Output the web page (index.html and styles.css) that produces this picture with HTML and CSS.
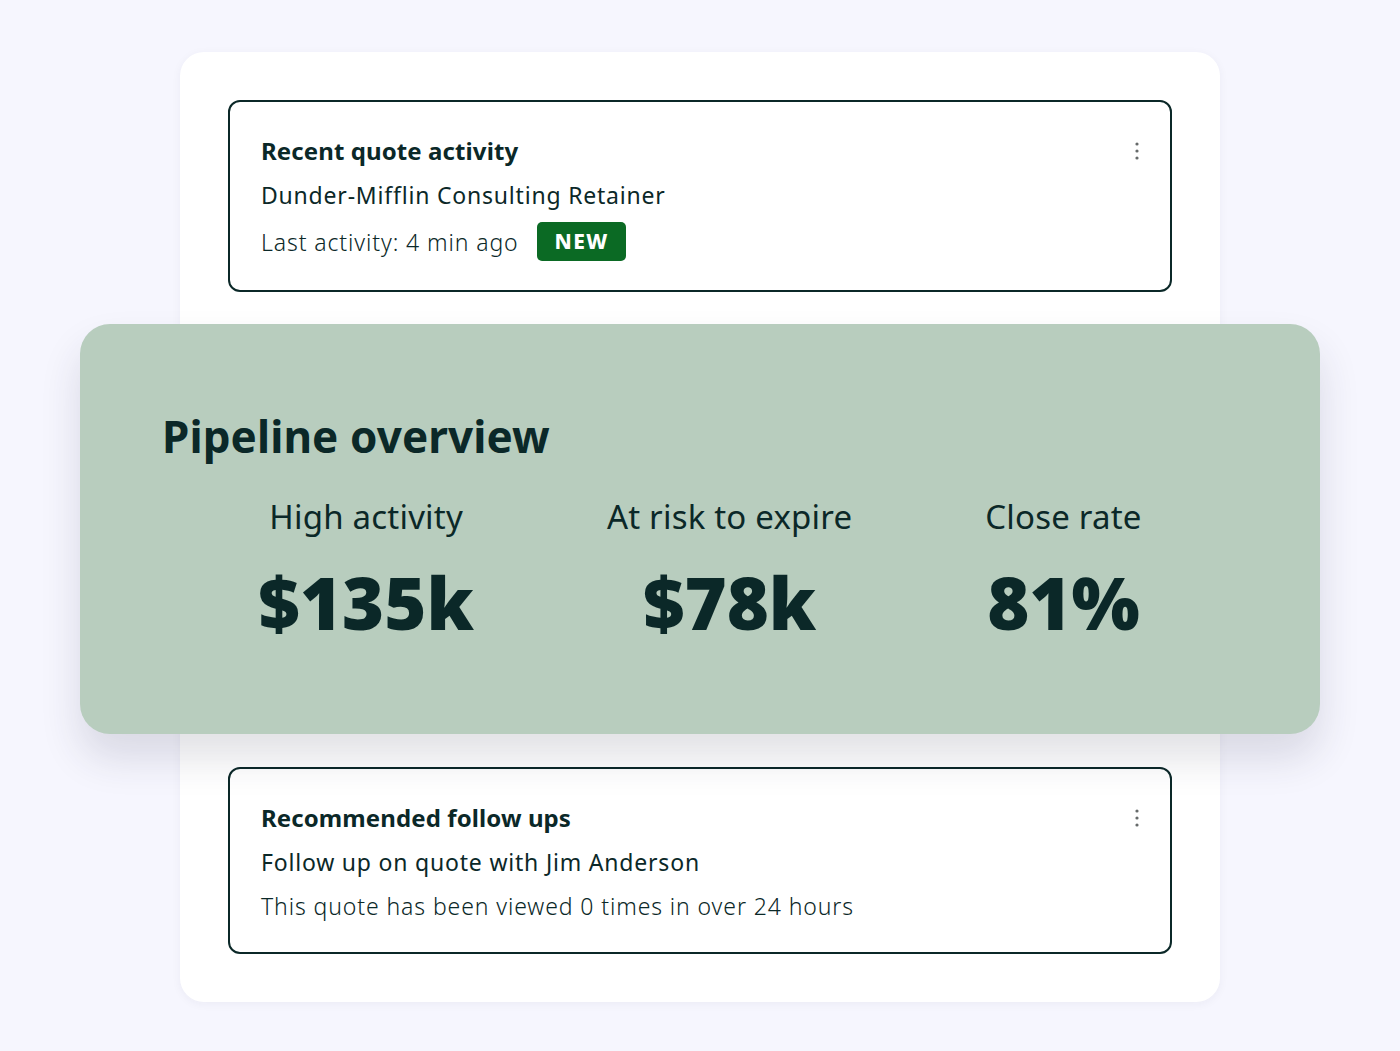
FILE: index.html
```html
<!DOCTYPE html>
<html lang="en">
<head>
<meta charset="utf-8">
<title>Pipeline</title>
<link rel="stylesheet" href="styles.css">
</head>
<body>
<main class="card">
  <section class="box">
    <div class="box-text">
      <h2 class="box-title">Recent quote activity</h2>
      <p class="box-line">Dunder-Mifflin Consulting Retainer</p>
      <p class="box-meta">Last activity: 4 min ago <span class="badge">NEW</span></p>
    </div>
    <svg class="more" width="6" height="20" viewBox="0 0 6 20" aria-hidden="true"><circle cx="3" cy="3" r="1.6"/><circle cx="3" cy="10" r="1.6"/><circle cx="3" cy="17" r="1.6"/></svg>
  </section>

  <section class="overview">
    <h1 class="ov-title">Pipeline overview</h1>
    <div class="stats">
      <div class="stat"><div class="stat-label">High activity</div><div class="stat-value">$135k</div></div>
      <div class="stat"><div class="stat-label">At risk to expire</div><div class="stat-value">$78k</div></div>
      <div class="stat"><div class="stat-label">Close rate</div><div class="stat-value">81%</div></div>
    </div>
  </section>

  <section class="box">
    <div class="box-text">
      <h2 class="box-title">Recommended follow ups</h2>
      <p class="box-line">Follow up on quote with Jim Anderson</p>
      <p class="box-meta">This quote has been viewed 0 times in over 24 hours</p>
    </div>
    <svg class="more" width="6" height="20" viewBox="0 0 6 20" aria-hidden="true"><circle cx="3" cy="3" r="1.6"/><circle cx="3" cy="10" r="1.6"/><circle cx="3" cy="17" r="1.6"/></svg>
  </section>
</main>
</body>
</html>
```
FILE: styles.css
```css
* { box-sizing: border-box; }
html, body { margin: 0; padding: 0; }
body {
  background: #f6f6fe;
  font-family: "Noto Sans", "Open Sans", sans-serif;
  color: #0b2828;
  padding: 52px 0 0 0;
  height: 1051px;
  overflow: hidden;
}
.card {
  width: 1040px;
  margin: 0 auto;
  background: #ffffff;
  border-radius: 24px;
  padding: 48px 48px 48px;
  box-shadow: 0 2px 10px rgba(30, 30, 80, 0.05);
}
.box {
  border: 2px solid #0b2828;
  border-radius: 12px;
  padding: 34px 30px 29px 31px;
  display: flex;
  justify-content: space-between;
  align-items: flex-start;
  background: #fff;
}
.box-text { display: flex; flex-direction: column; }
.box-title {
  margin: 0;
  font-size: 24px;
  font-weight: 700;
  line-height: 30px;
  letter-spacing: 0.1px;
}
.box-line {
  margin: 14px 0 0;
  font-size: 23px;
  font-weight: 400;
  line-height: 30px;
  letter-spacing: 0.8px;
}
.box-meta {
  margin: 12px 0 0;
  font-size: 23px;
  font-weight: 300;
  line-height: 34px;
  letter-spacing: 0.9px;
  display: flex;
  align-items: center;
}
.badge {
  display: inline-block;
  margin-left: 18px;
  background: #0b6a24;
  color: #fff;
  font-weight: 800;
  font-size: 21px;
  letter-spacing: 1.4px;
  line-height: 39px;
  padding: 0 17px 0 18px;
  border-radius: 5px;
}
.more { fill: #666a6a; margin-top: 5px; margin-right: 0; }

.overview {
  position: relative;
  z-index: 1;
  margin: 32px -148px 33px;
  background: #b8cdbe;
  border-radius: 30px;
  padding: 84px 82px 89px;
  box-shadow: 0 24px 40px rgba(40, 40, 70, 0.14);
}
.ov-title {
  margin: 0;
  font-size: 44px;
  font-weight: 700;
  line-height: 56px;
  letter-spacing: 0.1px;
}
.stats {
  display: flex;
  justify-content: center;
  gap: 133px;
  margin-top: 33px;
}
.stat { display: flex; flex-direction: column; align-items: center; }
.stat-label {
  font-size: 33px;
  font-weight: 400;
  line-height: 40px;
  letter-spacing: 0.2px;
}
.stat-value {
  font-size: 72px;
  font-weight: 900;
  line-height: 86px;
  margin-top: 22px;
}
```
